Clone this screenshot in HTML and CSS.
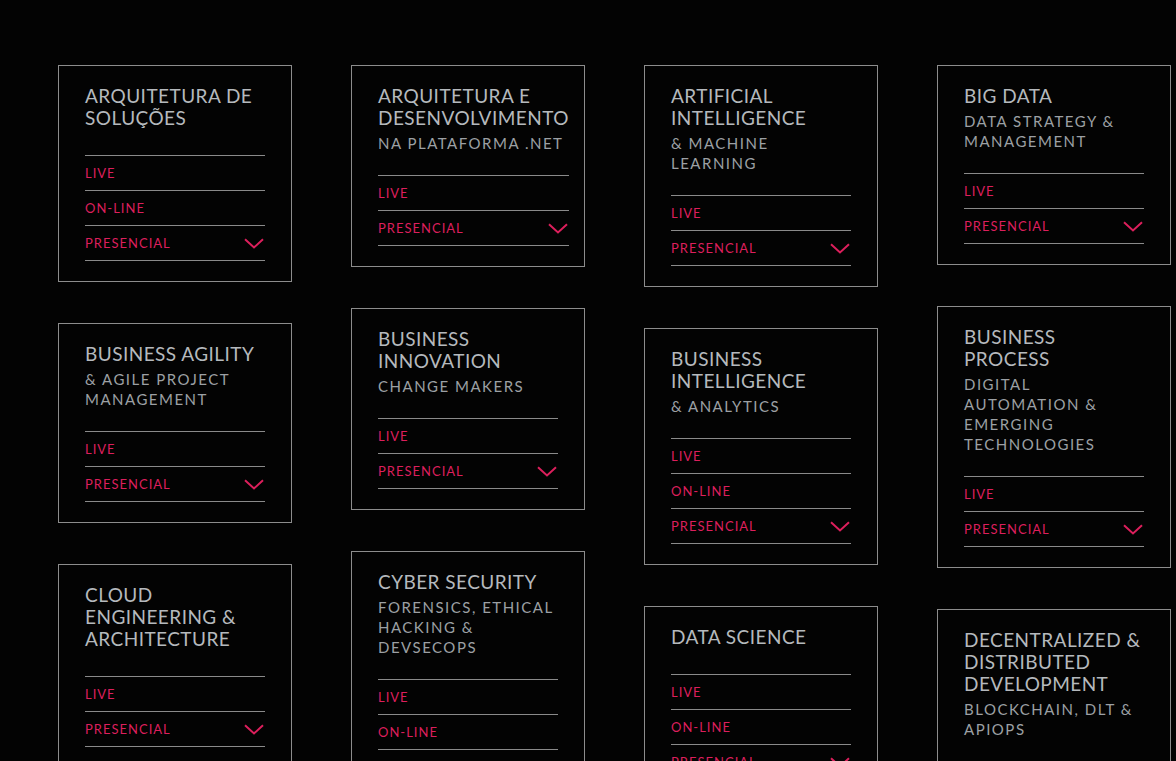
FILE: index.html
```html
<!DOCTYPE html>
<html lang="pt">
<head>
<meta charset="utf-8">
<title>Cursos</title>
<link rel="stylesheet" href="styles.css">
</head>
<body>
<main class="grid">
  <div class="col">
    <section class="card">
      <div class="inner">
        <h2 class="title">Arquitetura de Soluções</h2>
        <ul class="modes">
          <li class="mode">Live</li>
          <li class="mode">On-line</li>
          <li class="mode has-chev">Presencial<svg class="chev" viewBox="0 0 20 11"><path d="M1 1.2 L10 9.5 L19 1.2"/></svg></li>
        </ul>
      </div>
    </section>
    <section class="card">
      <div class="inner">
        <h2 class="title">Business Agility</h2>
        <p class="sub">&amp; Agile Project Management</p>
        <ul class="modes">
          <li class="mode">Live</li>
          <li class="mode has-chev">Presencial<svg class="chev" viewBox="0 0 20 11"><path d="M1 1.2 L10 9.5 L19 1.2"/></svg></li>
        </ul>
      </div>
    </section>
    <section class="card">
      <div class="inner">
        <h2 class="title">Cloud Engineering &amp; Architecture</h2>
        <ul class="modes">
          <li class="mode">Live</li>
          <li class="mode has-chev">Presencial<svg class="chev" viewBox="0 0 20 11"><path d="M1 1.2 L10 9.5 L19 1.2"/></svg></li>
        </ul>
      </div>
    </section>
  </div>
  <div class="col">
    <section class="card">
      <div class="inner">
        <h2 class="title">Arquitetura e Desenvolvimento</h2>
        <p class="sub">na plataforma .NET</p>
        <ul class="modes">
          <li class="mode">Live</li>
          <li class="mode has-chev">Presencial<svg class="chev" viewBox="0 0 20 11"><path d="M1 1.2 L10 9.5 L19 1.2"/></svg></li>
        </ul>
      </div>
    </section>
    <section class="card">
      <div class="inner">
        <h2 class="title">Business Innovation</h2>
        <p class="sub">Change Makers</p>
        <ul class="modes">
          <li class="mode">Live</li>
          <li class="mode has-chev">Presencial<svg class="chev" viewBox="0 0 20 11"><path d="M1 1.2 L10 9.5 L19 1.2"/></svg></li>
        </ul>
      </div>
    </section>
    <section class="card">
      <div class="inner">
        <h2 class="title">Cyber Security</h2>
        <p class="sub">Forensics, Ethical Hacking &amp; DevSecOps</p>
        <ul class="modes">
          <li class="mode">Live</li>
          <li class="mode">On-line</li>
          <li class="mode has-chev">Presencial<svg class="chev" viewBox="0 0 20 11"><path d="M1 1.2 L10 9.5 L19 1.2"/></svg></li>
        </ul>
      </div>
    </section>
  </div>
  <div class="col">
    <section class="card">
      <div class="inner">
        <h2 class="title">Artificial Intelligence</h2>
        <p class="sub">&amp; Machine Learning</p>
        <ul class="modes">
          <li class="mode">Live</li>
          <li class="mode has-chev">Presencial<svg class="chev" viewBox="0 0 20 11"><path d="M1 1.2 L10 9.5 L19 1.2"/></svg></li>
        </ul>
      </div>
    </section>
    <section class="card">
      <div class="inner">
        <h2 class="title">Business Intelligence</h2>
        <p class="sub">&amp; Analytics</p>
        <ul class="modes">
          <li class="mode">Live</li>
          <li class="mode">On-line</li>
          <li class="mode has-chev">Presencial<svg class="chev" viewBox="0 0 20 11"><path d="M1 1.2 L10 9.5 L19 1.2"/></svg></li>
        </ul>
      </div>
    </section>
    <section class="card">
      <div class="inner">
        <h2 class="title">Data Science</h2>
        <ul class="modes">
          <li class="mode">Live</li>
          <li class="mode">On-line</li>
          <li class="mode has-chev">Presencial<svg class="chev" viewBox="0 0 20 11"><path d="M1 1.2 L10 9.5 L19 1.2"/></svg></li>
        </ul>
      </div>
    </section>
  </div>
  <div class="col">
    <section class="card">
      <div class="inner">
        <h2 class="title">Big Data</h2>
        <p class="sub">Data Strategy &amp; Management</p>
        <ul class="modes">
          <li class="mode">Live</li>
          <li class="mode has-chev">Presencial<svg class="chev" viewBox="0 0 20 11"><path d="M1 1.2 L10 9.5 L19 1.2"/></svg></li>
        </ul>
      </div>
    </section>
    <section class="card">
      <div class="inner">
        <h2 class="title">Business Process</h2>
        <p class="sub">Digital Automation &amp; Emerging Technologies</p>
        <ul class="modes">
          <li class="mode">Live</li>
          <li class="mode has-chev">Presencial<svg class="chev" viewBox="0 0 20 11"><path d="M1 1.2 L10 9.5 L19 1.2"/></svg></li>
        </ul>
      </div>
    </section>
    <section class="card">
      <div class="inner">
        <h2 class="title">Decentralized &amp; Distributed Development</h2>
        <p class="sub">Blockchain, DLT &amp; APIOps</p>
        <ul class="modes">
          <li class="mode">Live</li>
          <li class="mode has-chev">Presencial<svg class="chev" viewBox="0 0 20 11"><path d="M1 1.2 L10 9.5 L19 1.2"/></svg></li>
        </ul>
      </div>
    </section>
  </div>
</main>
</body>
</html>
```
FILE: styles.css
```css
html, body {
  margin: 0;
  padding: 0;
  background: #030303;
  height: 100%;
  overflow: hidden;
}
body {
  font-family: Lato, "Open Sans", sans-serif;
  color: #b3b7bb;
}
.grid {
  display: grid;
  grid-template-columns: repeat(4, 234px);
  column-gap: 59px;
  align-items: start;
  padding: 65px 0 0 58px;
}
.col {
  display: flex;
  flex-direction: column;
  gap: 41px;
}
.card {
  border: 1px solid #8c8c8c;
  padding: 19px 26px 20px 26px;
}
.inner {
  width: 180px;
  min-width: min-content;
}
.title {
  margin: 0;
  padding-bottom: 4px;
  font-size: 19px;
  line-height: 22px;
  font-weight: 400;
  text-transform: uppercase;
  letter-spacing: 0.45px;
  color: #b5b9bd;
}
.sub {
  margin: 0;
  font-size: 15px;
  line-height: 20px;
  font-weight: 400;
  text-transform: uppercase;
  letter-spacing: 1.5px;
  color: #9ca0a4;
}
.modes {
  list-style: none;
  margin: 22px 0 0 0;
  padding: 0;
  border-top: 1px solid #8a8a8a;
}
.mode {
  display: flex;
  align-items: center;
  justify-content: space-between;
  height: 34px;
  border-bottom: 1px solid #8a8a8a;
  font-size: 13px;
  font-weight: 400;
  letter-spacing: 1px;
  text-transform: uppercase;
  color: #dc1f5c;
}
.chev {
  width: 20px;
  height: 11px;
  margin-right: 1px;
  fill: none;
  stroke: #dc1f5c;
  stroke-width: 2;
}
```
